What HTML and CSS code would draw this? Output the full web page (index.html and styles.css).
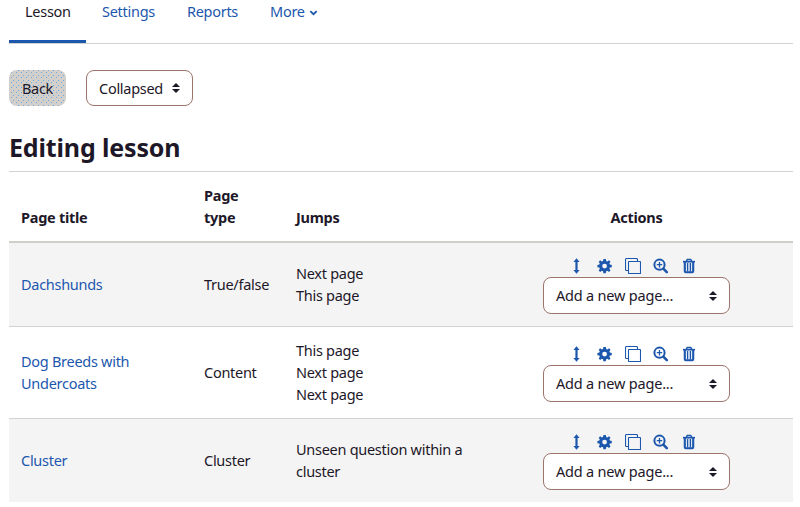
FILE: index.html
```html
<!DOCTYPE html>
<html lang="en">
<head>
<meta charset="utf-8">
<title>Editing lesson</title>
<link rel="stylesheet" href="styles.css">
</head>
<body>
<svg class="defs" aria-hidden="true">
  <symbol id="move" viewBox="0 0 16 16"><path d="M7.500 .3 10.600 4H8.600v8h2L7.500 15.700 4.400 12h2V4h-2z"/></symbol>
  <symbol id="gear" viewBox="0 0 16 16"><path fill-rule="evenodd" d="M6.400 1h2.400l.4 1.900 1.200.5 1.600-1.100 1.500 1.500-1.100 1.600.5 1.200 1.900.4v2.200l-1.900.4-.5 1.200 1.100 1.600-1.500 1.500-1.600-1.100-1.200.5-.4 1.900H6.400l-.4-1.900-1.200-.5-1.600 1.100-1.500-1.500 1.100-1.600-.5-1.200L.4 9.200V7l1.900-.4.5-1.200-1.100-1.600 1.500-1.500 1.600 1.100 1.200-.5zM7.600 5.700a2.400 2.400 0 1 0 0 4.800 2.400 2.400 0 0 0 0-4.800z"/></symbol>
  <symbol id="copy" viewBox="0 0 16 16"><path fill="none" stroke="currentColor" stroke-width="1.100" d="M3.500 12.500h-2a1 1 0 0 1-1-1v-10a1 1 0 0 1 1-1h10a1 1 0 0 1 1 1v2M4 3.500h11a.5.5 0 0 1 .5.5v11a.5.5 0 0 1-.5.5H4a.5.5 0 0 1-.5-.5V4a.5.5 0 0 1 .5-.5z"/></symbol>
  <symbol id="zoom" viewBox="0 0 16 16"><g fill="none" stroke="currentColor"><circle cx="6.500" cy="6.700" r="5.100" stroke-width="2"/><path d="m10.600 10.800 3.200 3.300" stroke-width="2.600" stroke-linecap="round"/><path d="M6.500 4v5.400M3.800 6.700h5.400" stroke-width="1.300"/></g></symbol>
  <symbol id="trash" viewBox="0 0 16 16"><g fill="none" stroke="currentColor"><path d="M2 3.700h12" stroke-width="1.700"/><path d="M5.300 3.500 6.200 1.500h3.600l.9 2" stroke-width="1.500"/><path d="M3.800 4v9.200q0 1 1 1h6.400q1 0 1-1V4" stroke-width="2.100"/><path d="M6.500 5v8.500M9.500 5v8.500" stroke-width="1.200"/><path d="M8 5v8.500" stroke-width="1" opacity=".45"/></g></symbol>
  <symbol id="sort" viewBox="0 0 8 10"><path d="M4 0 8 4H0zM0 6h8l-4 4z"/></symbol>
</svg>
<nav class="tabs">
  <a class="tab active">Lesson</a>
  <a class="tab">Settings</a>
  <a class="tab">Reports</a>
  <a class="tab">More<svg class="chevron" viewBox="0 0 8 6"><path d="m.8 1.200 3.200 3 3.200-3"/></svg></a>
</nav>
<div class="toolbar">
  <button class="back">Back</button>
  <div class="select mode"><span>Collapsed</span><svg class="sort"><use href="#sort"/></svg></div>
</div>
<h1>Editing lesson</h1>
<table>
  <colgroup><col class="c-title"><col class="c-type"><col class="c-jumps"><col></colgroup>
  <thead>
    <tr><th>Page title</th><th>Page<br>type</th><th>Jumps</th><th class="actions">Actions</th></tr>
  </thead>
  <tbody>
    <tr class="odd">
      <td><a>Dachshunds</a></td><td>True/false</td><td>Next page<br>This page</td>
      <td class="actions"><div class="icons"><svg><use href="#move"/></svg><svg><use href="#gear"/></svg><svg><use href="#copy"/></svg><svg><use href="#zoom"/></svg><svg><use href="#trash"/></svg></div>
      <div class="select add"><span>Add a new page...</span><svg class="sort"><use href="#sort"/></svg></div></td>
    </tr>
    <tr class="even">
      <td><a>Dog Breeds with<br>Undercoats</a></td><td>Content</td><td>This page<br>Next page<br>Next page</td>
      <td class="actions"><div class="icons"><svg><use href="#move"/></svg><svg><use href="#gear"/></svg><svg><use href="#copy"/></svg><svg><use href="#zoom"/></svg><svg><use href="#trash"/></svg></div>
      <div class="select add"><span>Add a new page...</span><svg class="sort"><use href="#sort"/></svg></div></td>
    </tr>
    <tr class="odd">
      <td><a>Cluster</a></td><td>Cluster</td><td>Unseen question within a<br>cluster</td>
      <td class="actions"><div class="icons"><svg><use href="#move"/></svg><svg><use href="#gear"/></svg><svg><use href="#copy"/></svg><svg><use href="#zoom"/></svg><svg><use href="#trash"/></svg></div>
      <div class="select add"><span>Add a new page...</span><svg class="sort"><use href="#sort"/></svg></div></td>
    </tr>
  </tbody>
</table>
</body>
</html>
```
FILE: styles.css
```css
* { box-sizing: border-box; }
body {
  margin: 0;
  padding: 0 7px 0 9px;
  height: 507px;
  overflow: hidden;
  background: #fff;
  color: #1d1728;
  font: 14.5px/22px "Noto Sans", "Open Sans", sans-serif;
  letter-spacing: -0.28px;
}
.defs { display: none; }
svg { fill: currentColor; }
a { color: #1c57ae; }
.tabs {
  display: flex;
  height: 44px;
  border-bottom: 1px solid #d2d2d2;
}
.tab {
  height: 43px;
  padding: 0 16px;
  white-space: nowrap;
}
.tab.active {
  width: 77px;
  color: #1d1728;
  border-bottom: 3px solid #1c57ae;
}
.chevron {
  width: 9px;
  height: 6px;
  margin-left: 4px;
  vertical-align: 1px;
  fill: none;
  stroke: currentColor;
  stroke-width: 1.8;
}
.toolbar {
  display: flex;
  gap: 20px;
  margin-top: 26px;
  height: 36px;
}
.back {
  width: 57px;
  height: 36px;
  padding: 0;
  border: 0;
  border-radius: 8px;
  font: inherit;
  letter-spacing: inherit;
  color: inherit;
  background-color: #d3d0cb;
  background-image: radial-gradient(circle, #68aae5 0.5px, transparent 0.9px), radial-gradient(circle, #68aae5 0.5px, transparent 0.9px);
  background-size: 5px 5px, 5px 5px;
  background-position: 0 0, 2px 3px;
}
.select {
  display: flex;
  align-items: center;
  justify-content: space-between;
  padding: 0 12px;
  background: #fff;
  border: 1px solid #9b746b;
  border-radius: 8px;
}
.mode { width: 107px; height: 36px; }
.add { width: 187px; height: 37px; margin: 0 auto; letter-spacing: -0.2px; }
.add span { padding-bottom: 1px; }
.sort { width: 8px; height: 10px; }
h1 {
  margin: 25px 0 8px;
  font-size: 25px;
  line-height: 32px;
  letter-spacing: -0.15px;
}
table {
  width: 784px;
  table-layout: fixed;
  border-collapse: separate;
  border-spacing: 0;
}
.c-title { width: 183px; }
.c-type { width: 92px; }
.c-jumps { width: 196px; }
th, td {
  padding: 0 12px;
  text-align: left;
  white-space: nowrap;
}
th {
  height: 72px;
  padding-bottom: 13px;
  vertical-align: bottom;
  border-top: 1px solid #d2d2ce;
  border-bottom: 2px solid #cfcfca;
}
td { vertical-align: middle; padding-bottom: 2px; }
.odd td { height: 84px; background: #f4f4f4; border-bottom: 1px solid #d2d2ce; }
.even td { height: 92px; border-bottom: 1px solid #d2d2ce; }
.odd:last-child td { height: 83px; border-bottom: 0; }
td.actions { padding-bottom: 0; }
.actions { text-align: center; }
.icons {
  display: flex;
  justify-content: center;
  gap: 12px;
  height: 22px;
  padding: 3px 8px 0 0;
  color: #1c57ae;
}
.icons svg { width: 16px; height: 16px; }
```
